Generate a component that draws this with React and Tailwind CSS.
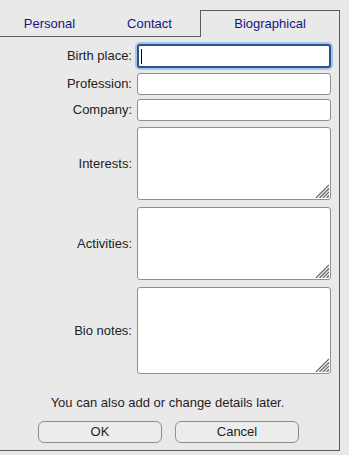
import React from "react";

const font = "font-['Liberation_Sans',Arial,sans-serif]";

function Grip() {
    return (
        <svg className="absolute right-[1px] bottom-[1px]" width="14" height="14" viewBox="0 0 14 14">
            {[1, 4.5, 8, 11.5].map((o) => (
                <g key={o}>
                    <line x1={o} y1="14" x2="14" y2={o} stroke="#666666" strokeWidth="1.2" />
                    <line x1={o + 1.4} y1="14" x2="14" y2={o + 1.4} stroke="#d0d0d0" strokeWidth="1" />
                </g>
            ))}
        </svg>
    );
}

function Row({ label, children, className = "" }) {
    return (
        <div className={`flex items-center ${className}`}>
            <div className="w-[132px] text-right text-[13px] text-[#222]">{label}</div>
            <div className="ml-[5px] w-[194px]">{children}</div>
        </div>
    );
}

function Field({ h = "h-[22px]" }) {
    return <div className={`${h} w-full rounded-[3px] border border-[#8f8f8f] bg-white`} />;
}

function Area({ h }) {
    return (
        <div className={`relative ${h} w-full rounded-[3px] border border-[#8f8f8f] bg-white`}>
            <Grip />
        </div>
    );
}

export default function App() {
    return (
        <div className={`w-[349px] h-[455px] bg-[#e9e9e9] ${font} overflow-hidden`}>
            {/* tab strip */}
            <div className="flex h-[37px] w-[340px]">
                <div className="flex w-[200px] pt-[12px] border-b border-[#5c5c5c] text-[13px] text-[#15157f]">
                    <div className="flex w-[100px] items-center justify-center">Personal</div>
                    <div className="flex w-[102px] items-center justify-center">Contact</div>
                </div>
                <div className="mt-[10px] flex w-[140px] items-center justify-center border-l border-r border-t border-[#5c5c5c] text-[13px] text-[#15157f]">
                    Biographical
                </div>
            </div>

            {/* panel */}
            <div className="w-[340px] border-r border-b border-[#5c5c5c] pt-[7px] pb-[7px]">
                <Row label="Birth place:">
                    <div className="relative h-[24px] w-full rounded-[3px] border-2 border-[#24548c] bg-white shadow-[0_0_0_2px_#a8c3e4]">
                        <div className="absolute left-[2px] top-[3px] h-[15px] w-[1px] bg-black" />
                    </div>
                </Row>
                <Row label="Profession:" className="mt-[5px]">
                    <Field />
                </Row>
                <Row label="Company:" className="mt-[4px]">
                    <Field />
                </Row>
                <Row label="Interests:" className="mt-[6px]">
                    <Area h="h-[73px]" />
                </Row>
                <Row label="Activities:" className="mt-[7px]">
                    <Area h="h-[73px]" />
                </Row>
                <Row label="Bio notes:" className="mt-[7px]">
                    <Area h="h-[87px]" />
                </Row>

                <div className="mt-[21px] text-center text-[13px] leading-[15px] text-[#1e1e1e] pr-[4px]">
                    You can also add or change details later.
                </div>

                <div className="mt-[11px] flex pl-[38px] gap-[13px]">
                    <button className="h-[22px] w-[124px] rounded-[6px] border border-[#8f8f8f] bg-[#ececec] text-[13px] text-[#1e1e1e]">
                        OK
                    </button>
                    <button className="h-[22px] w-[124px] rounded-[6px] border border-[#8f8f8f] bg-[#ececec] text-[13px] text-[#1e1e1e]">
                        Cancel
                    </button>
                </div>
            </div>
        </div>
    );
}
